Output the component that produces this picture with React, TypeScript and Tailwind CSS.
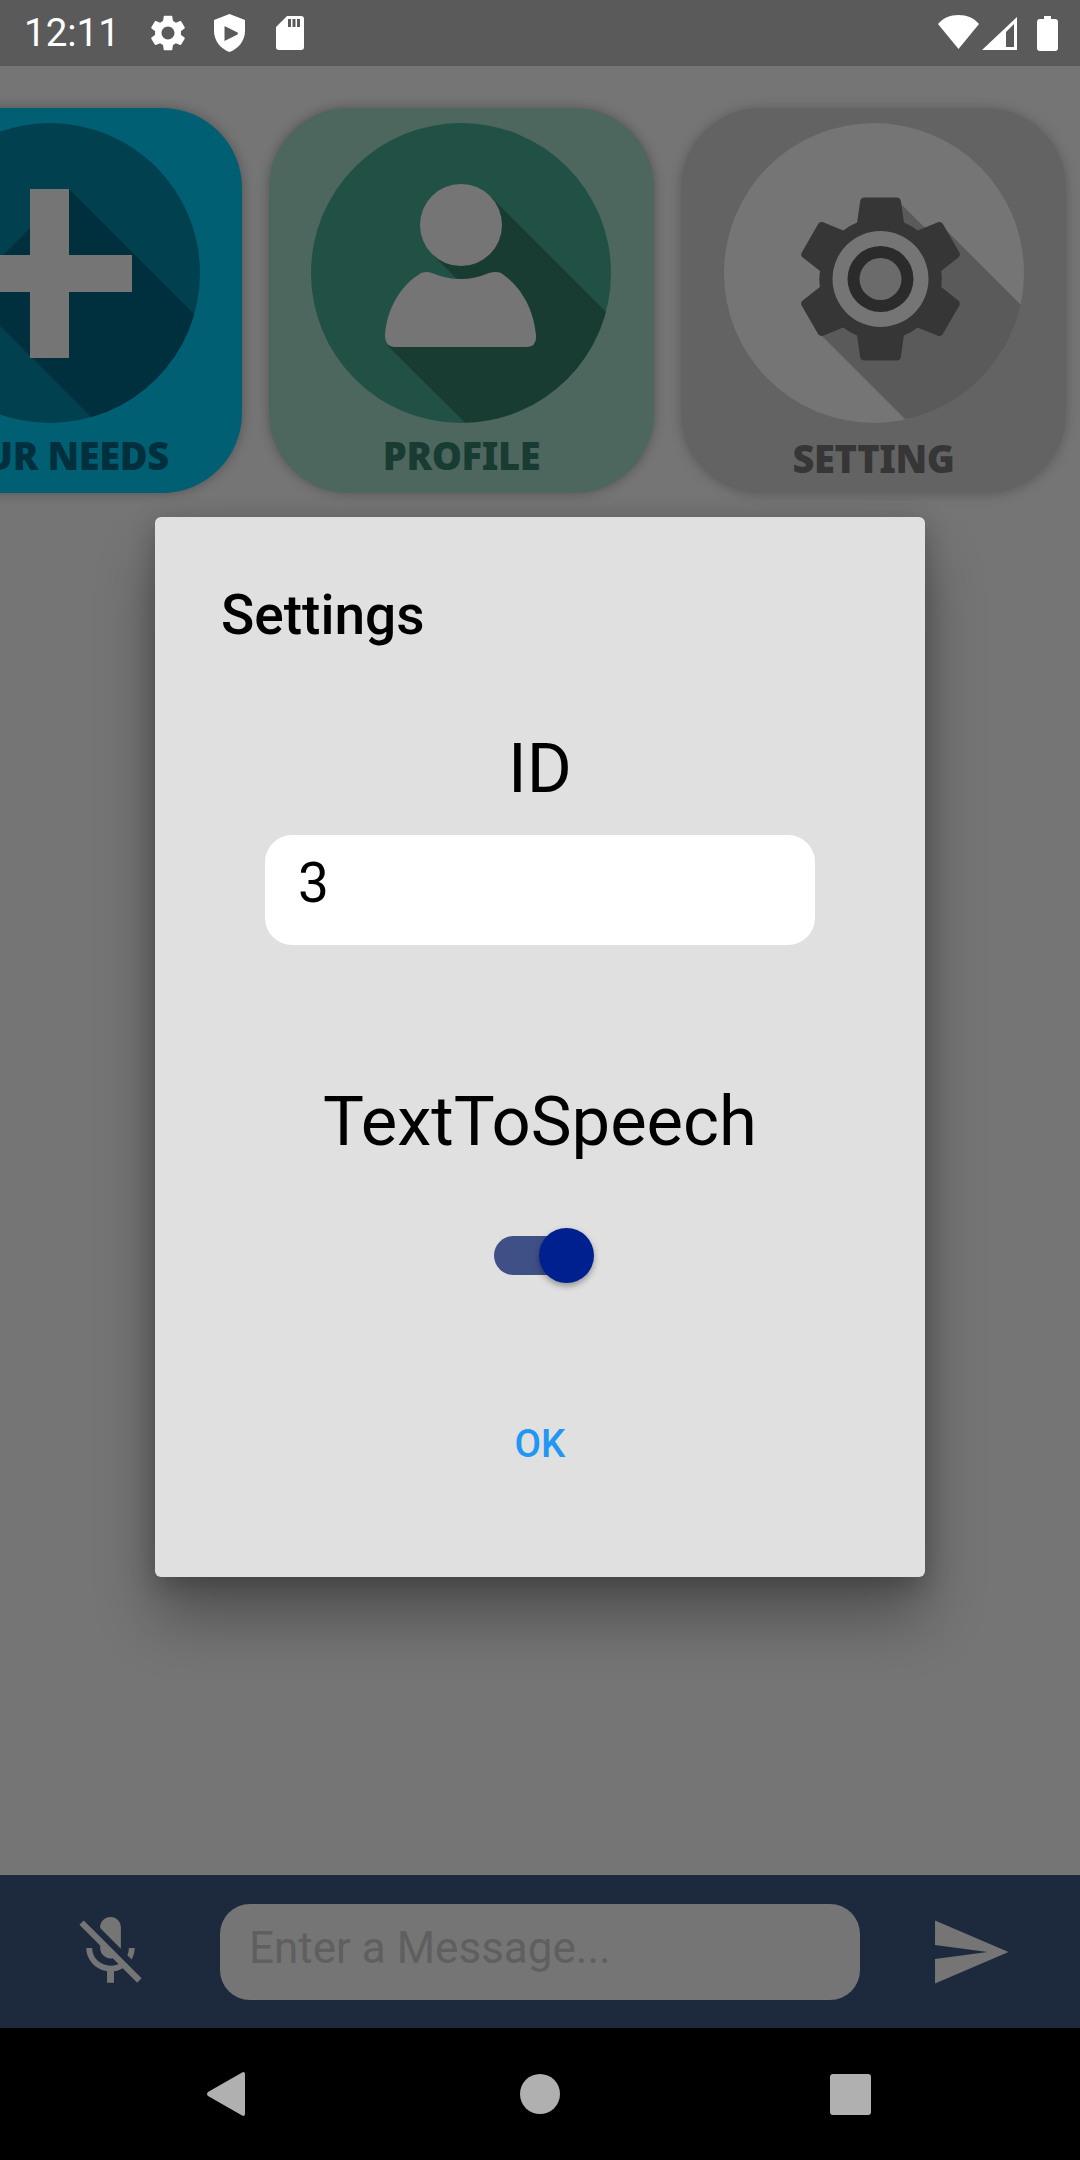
import React from "react";

const GEAR =
  "M19.14 12.94c.04-.3.06-.61.06-.94 0-.32-.02-.64-.07-.94l2.03-1.58c.18-.14.23-.41.12-.61l-1.92-3.32c-.12-.22-.37-.29-.59-.22l-2.39.96c-.5-.38-1.03-.7-1.62-.94l-.36-2.54c-.04-.24-.24-.41-.48-.41h-3.84c-.24 0-.43.17-.47.41l-.36 2.54c-.59.24-1.13.57-1.62.94l-2.39-.96c-.22-.08-.47 0-.59.22L2.74 8.87c-.12.21-.08.47.12.61l2.03 1.58c-.05.3-.09.63-.09.94s.02.64.07.94l-2.03 1.58c-.18.14-.23.41-.12.61l1.92 3.32c.12.22.37.29.59.22l2.39-.96c.5.38 1.03.7 1.62.94l.36 2.54c.05.24.24.41.48.41h3.84c.24 0 .44-.17.47-.41l.36-2.54c.59-.24 1.13-.56 1.62-.94l2.39.96c.22.08.47 0 .59-.22l1.92-3.32c.12-.22.07-.47-.12-.61l-2.01-1.58z";

function Tile({ bg, label, labelColor, labelMargin, shadow, children }: { bg: string; label: string; labelColor: string; labelMargin: string; shadow: string; children: React.ReactNode }) {
  return (
    <div className={`w-[385px] h-[385px] shrink-0 rounded-[80px] flex flex-col items-center pt-[15px] ${bg} ${shadow}`}>
      {children}
      <span className={`text-[38px] leading-[44px] font-black tracking-[-0.4px] whitespace-nowrap font-['Noto_Sans',sans-serif] ${labelMargin} ${labelColor}`}>{label}</span>
    </div>
  );
}

function PlusArt() {
  return (
    <svg width="300" height="300" viewBox="0 0 300 300" className="shrink-0">
      <clipPath id="c1"><circle cx="150" cy="150" r="150" /></clipPath>
      <circle cx="150" cy="150" r="150" fill="#00404f" />
      <polygon clipPath="url(#c1)" points="169,66 469,366 366,469 66,169" fill="#00303d" />
      <path d="M130 66h39v66h63v37h-63v66h-39v-66H66v-37h64z" fill="#757575" />
    </svg>
  );
}

function ProfileArt() {
  return (
    <svg width="300" height="300" viewBox="0 0 300 300" className="shrink-0 -ml-[2px]">
      <clipPath id="c2"><circle cx="150" cy="150" r="150" /></clipPath>
      <circle cx="150" cy="150" r="150" fill="#215045" />
      <g clipPath="url(#c2)" fill="#193c32">
        <polygon points="179,73 479,373 421,431 121,131" />
        <polygon points="76,222 215,160 500,445 300,445" />
      </g>
      <circle cx="150" cy="102" r="41" fill="#757575" />
      <path d="M84 224H215Q226 224 225 212C222 180 205 160 190 150Q185 148 178 150Q150 162 121 150Q116 148 110 150C90 162 76 185 74 212Q74 224 84 224Z" fill="#757575" />
    </svg>
  );
}

function SettingArt() {
  return (
    <svg width="300" height="300" viewBox="0 0 300 300" className="shrink-0">
      <clipPath id="c3"><circle cx="150" cy="150" r="150" /></clipPath>
      <circle cx="150" cy="150" r="150" fill="#757575" />
      <polygon clipPath="url(#c3)" points="173,77 200,104 219,104 419,304 394,509 94,209" fill="#5a5a5a" />
      <path d={GEAR} fill="#363636" transform="translate(54.5 54) scale(8.5 8.5)" />
      <circle cx="156.5" cy="156" r="48" fill="#757575" />
      <circle cx="156.5" cy="156" r="33" fill="#2b2b2b" />
      <circle cx="156.5" cy="156" r="21" fill="#6b6b6b" />
    </svg>
  );
}

function StatusBar() {
  return (
    <div className="h-[66px] shrink-0 bg-[#5a5a5a] flex items-center pl-[24px] pr-[22px] text-white font-['Roboto',sans-serif]">
      <span className="text-[38.5px] font-normal leading-none w-[88px]">12:11</span>
      <svg width="36" height="36" viewBox="2 2 20 20" fill="white" className="ml-[38px]">
        <path fillRule="evenodd" d={GEAR + "M12 15.6c-1.98 0-3.6-1.62-3.6-3.6s1.62-3.6 3.6-3.6 3.6 1.62 3.6 3.6-1.62 3.6-3.6 3.6z"} />
      </svg>
      <svg width="31" height="38" viewBox="0 0 31 38" fill="white" className="ml-[28px]">
        <path fillRule="evenodd" d="M15.5 0L31 6V17C31 27 24 35 15.5 38C7 35 0 27 0 17V6ZM10.5 13V26Q10.5 27.500 11.500 26.500L23.500 20.500Q24.500 19.500 23.500 18.500L11.500 12.500Q10.500 12 10.500 13Z" />
      </svg>
      <svg width="28" height="34" viewBox="0 0 28 34" fill="white" className="ml-[31px]">
        <path fillRule="evenodd" d="M11 0H25Q28 0 28 3V31Q28 34 25 34H3Q0 34 0 31V11ZM12 3V11H15V3ZM16.500 3V11H19.500V3ZM21 3V11H24V3Z" />
      </svg>
      <div className="flex-1" />
      <svg width="41" height="34" viewBox="0 0 41 34" fill="white" className="-mt-[2px]">
        <path d="M20.5 34L0 9C5 3 12 0 20.5 0S36 3 41 9Z" />
      </svg>
      <svg width="35" height="33" viewBox="0 0 35 33" fill="white" className="ml-[3px]">
        <path fillRule="evenodd" d="M0 33L35 0V33ZM24 30H32V7L24 15Z" />
      </svg>
      <svg width="21" height="35" viewBox="0 0 21 35" fill="white" className="ml-[20px]">
        <path d="M7 0H14V3H18Q21 3 21 6V32Q21 35 18 35H3Q0 35 0 32V6Q0 3 3 3H7Z" />
      </svg>
    </div>
  );
}

function SettingsDialog() {
  return (
    <div className="absolute left-[155px] top-[517px] w-[770px] h-[1060px] rounded-[6px] bg-[#e0e0e0] shadow-[0_42px_60px_rgba(0,0,0,0.3),0_6px_26px_rgba(0,0,0,0.24)] text-black font-['Roboto',sans-serif] flex flex-col">
      <h2 className="pl-[66px] mt-[65px] text-[55px] leading-[66px] font-medium">Settings</h2>
      <div className="mt-[82px] text-center text-[68.75px] leading-[78px]">ID</div>
      <div className="mt-[27px] mx-auto w-[550px] h-[110px] rounded-[27px] bg-white pl-[33px] pt-[16px] text-[55px] leading-[65px]">3</div>
      <div className="mt-[138px] text-center text-[68.75px] leading-[78px]">TextToSpeech</div>
      <div className="mt-[75px] ml-[339px] relative w-[95px] h-[39px] rounded-full bg-[#3f5087]">
        <div className="absolute right-[-5px] top-[-8px] w-[55px] h-[55px] rounded-full bg-[#00208f] shadow-[0_3px_6px_rgba(0,0,0,0.35)]" />
      </div>
      <div className="mt-[146px] text-center text-[38.5px] leading-[46px] font-medium text-[#2196f3]">OK</div>
    </div>
  );
}

export default function App() {
  return (
    <div className="relative w-[1080px] h-[2160px] overflow-hidden bg-[#757575] flex flex-col">
      <StatusBar />
      <div className="flex-1 pt-[42px]">
        <div className="flex gap-[27px] ml-[-143px]">
          <Tile bg="bg-[#005f73]" label="YOUR NEEDS" labelColor="text-[#00303d]" labelMargin="mt-[10px]" shadow="shadow-[0_0_12px_rgba(0,0,0,0.3)]"><PlusArt /></Tile>
          <Tile bg="bg-[#4d665e]" label="PROFILE" labelColor="text-[#193c32]" labelMargin="mt-[10px]" shadow="shadow-[0_0_12px_rgba(0,0,0,0.3)]"><ProfileArt /></Tile>
          <Tile bg="bg-[#636363]" label="SETTING" labelColor="text-[#363636]" labelMargin="mt-[13px]" shadow="shadow-[0_1px_10px_2px_rgba(95,95,95,0.9)]"><SettingArt /></Tile>
        </div>
      </div>
      <div className="h-[153px] shrink-0 bg-[#1d2a3d] flex items-center pl-[69px]">
        <svg width="83" height="83" viewBox="0 0 24 24" fill="#757575" className="shrink-0">
          <path d="M19 11h-1.7c0 .74-.16 1.43-.43 2.05l1.23 1.23c.56-.98.9-2.09.9-3.28zm-4.02.17c0-.06.02-.11.02-.17V5c0-1.66-1.34-3-3-3S9 3.34 9 5v.18l5.98 5.99zM4.27 3L3 4.27l6.01 6.01V11c0 1.66 1.33 3 2.99 3 .22 0 .44-.03.65-.08l1.66 1.66c-.71.33-1.5.52-2.31.52-2.76 0-5.3-2.1-5.3-5.1H5c0 3.41 2.72 6.23 6 6.72V21h2v-3.28c.91-.13 1.77-.45 2.54-.9L19.73 21 21 19.73 4.27 3z" />
        </svg>
        <div className="ml-[68px] w-[640px] h-[96px] rounded-[30px] bg-[#757575] flex items-center pl-[29px] pb-[8px] text-[44px] text-[#5f5f5f] font-['Roboto',sans-serif]">Enter a Message...</div>
        <svg width="84" height="84" viewBox="0 0 24 24" fill="#757575" className="ml-[68px] shrink-0">
          <path d="M2.01 21L23 12 2.01 3 2 10l15 2-15 2z" />
        </svg>
      </div>
      <div className="h-[132px] shrink-0 bg-black flex items-center pl-[207px]">
        <svg width="38" height="44" viewBox="0 0 38 44" fill="#b0b0b0" className="shrink-0">
          <path d="M36 0Q38 0 38 2V42Q38 44 36 44L1 24Q-1 22 1 20Z" />
        </svg>
        <div className="ml-[275px] w-[40px] h-[40px] rounded-full bg-[#b0b0b0]" />
        <div className="ml-[270px] w-[41px] h-[41px] rounded-[3px] bg-[#b0b0b0]" />
      </div>
      <SettingsDialog />
    </div>
  );
}
